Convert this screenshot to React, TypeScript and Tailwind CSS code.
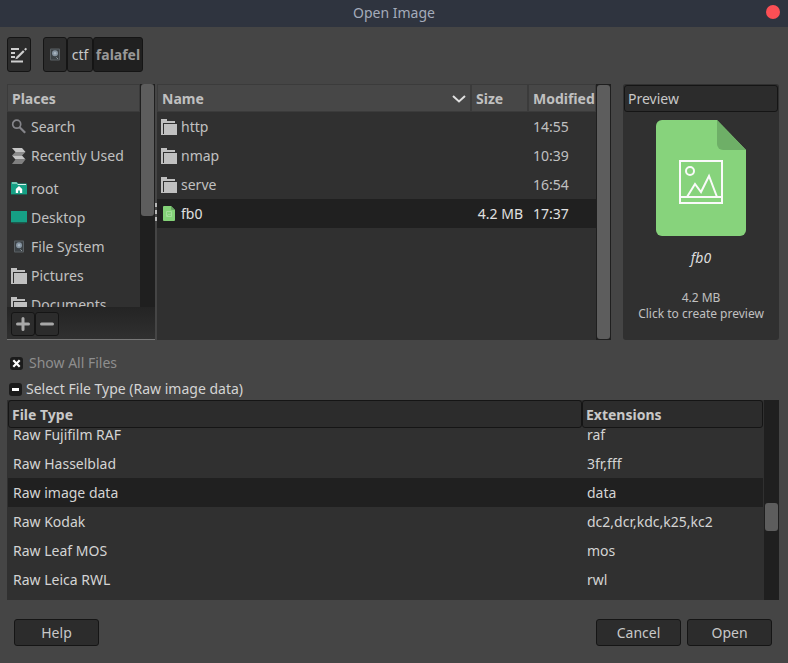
import type { ReactNode } from "react";

const HEAD_CELL = "border border-[#3b3b3b] bg-[#474747] p-0 pt-px pl-1 text-left font-bold";
const BUTTON =
  "flex items-center justify-center rounded-[3px] border border-[#151515] bg-[#2c2c2c] text-[#c8c8c8]";

function FolderIcon() {
  return (
    <svg width="16" height="16" viewBox="0 0 16 16" className="shrink-0" shapeRendering="crispEdges">
      <path d="M0 0h6v2h8v2H2v11h1v1H0z" fill="#c0c0c0" />
      <path d="M3 5h13v11H3z" fill="#c0c0c0" />
    </svg>
  );
}

function SearchIcon() {
  return (
    <svg width="16" height="16" viewBox="0 0 16 16" className="shrink-0" fill="none" stroke="#85858a">
      <circle cx="5.7" cy="5.2" r="4" strokeWidth="1.7" />
      <path d="M8.6 8.2 14.2 13.8" strokeWidth="2.2" />
    </svg>
  );
}

function RecentIcon() {
  return (
    <svg width="16" height="16" viewBox="0 0 16 16" className="shrink-0">
      <path d="M1 0h10l3.5 4h-10z" fill="#c6c6c6" />
      <path d="M4.5 4h10L11 7.5H1z" fill="#8b8b8b" />
      <path d="M1 7.5h10l3.5 4h-10z" fill="#c6c6c6" />
      <path d="M4.5 11.5h10L11 16H1z" fill="#808080" />
    </svg>
  );
}

function HomeIcon() {
  return (
    <svg width="16" height="13" viewBox="0 0 16 13" className="shrink-0">
      <path d="M0 1a1 1 0 0 1 1-1h5l1 1.5h8a1 1 0 0 1 1 1V12H0z" fill="#16a085" />
      <path d="M1 0.5h4.6l1 1.5H15v1H7L5.6 1.5H1z" fill="#d9efe9" />
      <path d="M0 12h16v1H0z" fill="#215c50" />
      <path d="M8 4 4.8 7v4h2.3V8.6h1.8V11h2.3V7z" fill="#fff" />
    </svg>
  );
}

function DesktopIcon() {
  return (
    <svg width="16" height="13" viewBox="0 0 16 13" className="shrink-0">
      <path d="M0 0h16v11H0z" fill="#16a085" />
      <path d="M0 11h16v1H0z" fill="#1d5a4e" />
      <path d="M2 12h12v1H2z" fill="#25453e" />
    </svg>
  );
}

function DiskIcon() {
  return (
    <svg width="16" height="13" viewBox="0 0 16 13" className="shrink-0">
      <rect x="3" y="0.5" width="10" height="12" rx="1" fill="#5a6064" />
      <rect x="4" y="1.5" width="8" height="10" fill="#3c4246" />
      <circle cx="8" cy="5.2" r="3" fill="#8593a0" />
      <circle cx="8" cy="5.2" r="1.2" fill="#a9b6c0" />
      <path d="M9.5 9.5 10.8 10.8" stroke="#a0a8ae" strokeWidth="1" />
    </svg>
  );
}

function ImageFileIcon() {
  return (
    <svg width="12" height="15" viewBox="0 0 12 15" className="mx-0.5 shrink-0">
      <path d="M1 0h7l4 4v10a1 1 0 0 1-1 1H1a1 1 0 0 1-1-1V1a1 1 0 0 1 1-1z" fill="#84d278" />
      <path d="M8 0l4 4H9a1 1 0 0 1-1-1z" fill="#68a561" />
      <path d="M3.5 5.5h5v5h-5z" fill="none" stroke="#a4de9b" />
      <path d="M4 10l1.7-2 1 1L8 7.5" fill="none" stroke="#a4de9b" />
    </svg>
  );
}

function ImageFilePreview() {
  return (
    <svg width="90" height="116" viewBox="0 0 90 116" role="img" aria-label="Image file">
      <path d="M6 0h55l29 30v80a6 6 0 0 1-6 6H6a6 6 0 0 1-6-6V6a6 6 0 0 1 6-6z" fill="#87d37c" />
      <path d="M61 0l29 30H67a6 6 0 0 1-6-6z" fill="#6eaf67" />
      <g fill="none" stroke="#fafafa" strokeWidth="2">
        <path d="M24 41h42v42H24zM24 77h42" />
        <circle cx="34" cy="51" r="4" />
        <path d="M31 77l8-13 6 8 8-16 8 21" />
      </g>
    </svg>
  );
}

function EditPathIcon() {
  return (
    <svg width="18" height="16" viewBox="0 0 18 16" fill="none" stroke="#cfcfcf">
      <path d="M1 2h8M1 6h4M1 10h4M1 14.5h12" strokeWidth="2" />
      <path d="M7 10.8 13.8 4" strokeWidth="2.2" />
      <path d="M14.9 1.5l1.4 1.4" strokeWidth="2.2" />
      <path d="M5.4 12.3l.7-2.6 1.9 1.9z" fill="#cfcfcf" stroke="none" />
    </svg>
  );
}

type Place = { label: string; icon: ReactNode };

const shortcuts: Place[] = [
  { label: "Search", icon: <SearchIcon /> },
  { label: "Recently Used", icon: <RecentIcon /> },
];

const places: Place[] = [
  { label: "root", icon: <HomeIcon /> },
  { label: "Desktop", icon: <DesktopIcon /> },
  { label: "File System", icon: <DiskIcon /> },
  { label: "Pictures", icon: <FolderIcon /> },
  { label: "Documents", icon: <FolderIcon /> },
];

const files = [
  { name: "http", size: "", modified: "14:55", folder: true },
  { name: "nmap", size: "", modified: "10:39", folder: true },
  { name: "serve", size: "", modified: "16:54", folder: true },
  { name: "fb0", size: "4.2 MB", modified: "17:37", folder: false },
];

const fileTypes = [
  { name: "Raw Hasselblad", ext: "3fr,fff" },
  { name: "Raw image data", ext: "data" },
  { name: "Raw Kodak", ext: "dc2,dcr,kdc,k25,kc2" },
  { name: "Raw Leaf MOS", ext: "mos" },
  { name: "Raw Leica RWL", ext: "rwl" },
];

function PlaceGroup({ items }: { items: Place[] }) {
  return (
    <ul>
      {items.map((p) => (
        <li key={p.label}>
          <button type="button" className="flex h-[29px] w-full items-center gap-1 pl-1 text-left whitespace-nowrap">
            {p.icon}
            {p.label}
          </button>
        </li>
      ))}
    </ul>
  );
}

function PlacesPanel() {
  return (
    <section className="flex w-[148px] shrink-0 flex-col border-b border-[#777777] bg-[#272727]">
      <div className="flex min-h-0 flex-1">
        <div className="min-w-0 flex-1 overflow-hidden bg-[#303030]">
          <h2 className="flex h-7 items-center border border-[#3b3b3b] bg-[#474747] px-1 pt-0.5 font-bold">Places</h2>
          <PlaceGroup items={shortcuts} />
          <div className="h-1" />
          <PlaceGroup items={places} />
        </div>
        <div className="w-[15px] bg-[#1f1f1f] px-px">
          <div className="h-[132px] rounded-[3px] bg-[#5d5d5d]" />
        </div>
      </div>
      <div className="flex h-8 items-center bg-linear-to-b from-[#242424] to-[#303030] pt-0.5 pl-1">
        <button type="button" aria-label="Add bookmark" className={`${BUTTON} size-6`}>
          <svg width="14" height="14" viewBox="0 0 14 14" stroke="#a8a8a8" strokeWidth="3" strokeLinecap="round">
            <path d="M1.5 7h11M7 1.5v11" />
          </svg>
        </button>
        <button type="button" aria-label="Remove bookmark" className={`${BUTTON} size-6`}>
          <svg width="14" height="14" viewBox="0 0 14 14" stroke="#a8a8a8" strokeWidth="3" strokeLinecap="round">
            <path d="M1.5 7h11" />
          </svg>
        </button>
      </div>
    </section>
  );
}

function FilesPanel() {
  return (
    <section className="flex min-w-0 flex-1 bg-[#303030]">
      <div className="min-w-0 flex-1">
        <table className="w-full table-fixed border-separate border-spacing-0">
          <colgroup>
            <col />
            <col className="w-[57px]" />
            <col className="w-[68px]" />
          </colgroup>
          <thead>
            <tr className="h-7">
              <th className={HEAD_CELL}>
                <div className="flex items-center justify-between pr-1">
                  Name
                  <svg width="14" height="8" viewBox="0 0 14 8" fill="none" stroke="#e0e0e0" strokeWidth="2">
                    <path d="M1 1l6 5.5L13 1" />
                  </svg>
                </div>
              </th>
              <th className={HEAD_CELL}>Size</th>
              <th className={HEAD_CELL}>Modified</th>
            </tr>
          </thead>
          <tbody>
            {files.map((f) => (
              <tr key={f.name} className={f.folder ? "h-[29px]" : "h-[29px] bg-[#202020] text-[#e0e0e0]"}>
                <td className="p-0 pl-1">
                  <div className="flex items-center gap-1">
                    {f.folder ? <FolderIcon /> : <ImageFileIcon />}
                    {f.name}
                  </div>
                </td>
                <td className="p-0 pr-[5px] text-right whitespace-nowrap">{f.size}</td>
                <td className="p-0 pl-[5px]">{f.modified}</td>
              </tr>
            ))}
          </tbody>
        </table>
      </div>
      <div className="flex w-[15px] bg-[#1f1f1f] p-px">
        <div className="flex-1 rounded-[3px] bg-[#5d5d5d]" />
      </div>
    </section>
  );
}

function PreviewPanel() {
  return (
    <section className="ml-3 flex w-[156px] shrink-0 flex-col rounded-[3px] bg-[#303030] p-px">
      <button type="button" className={`${BUTTON} h-[27px] shrink-0 justify-start px-[3px]`}>
        Preview
      </button>
      <button type="button" className="flex flex-col items-center pt-2">
        <ImageFilePreview />
        <span className="mt-3 leading-5 text-[#dddddd] italic">fb0</span>
        <span className="mt-[22px] text-xs leading-4">4.2 MB</span>
        <span className="text-xs leading-4 whitespace-nowrap">Click to create preview</span>
      </button>
    </section>
  );
}

function FileTypeTable() {
  const head = "rounded-[3px] border border-[#151515] bg-[#2c2c2c] p-0 px-[3px] pt-px text-left font-bold";
  return (
    <section className="flex h-[200px] bg-[#303030] text-[#d4d4d4]">
      <div className="min-w-0 flex-1 overflow-hidden px-px">
        <table className="w-full table-fixed border-separate border-spacing-0">
          <colgroup>
            <col />
            <col className="w-[181px]" />
          </colgroup>
          <thead>
            <tr className="h-7 text-[#c8c8c8]">
              <th className={head}>File Type</th>
              <th className={head}>Extensions</th>
            </tr>
          </thead>
          <tbody>
            <tr>
              {["Raw Fujifilm RAF", "raf"].map((text) => (
                <td key={text} className="p-0 pl-[5px]">
                  <div className="flex h-[21px] items-end overflow-hidden">
                    <div className="flex h-[29px] shrink-0 items-center">{text}</div>
                  </div>
                </td>
              ))}
            </tr>
            {fileTypes.map((t) => (
              <tr key={t.name} className={t.ext === "data" ? "h-[29px] bg-[#202020]" : "h-[29px]"}>
                <td className="p-0 pl-[5px]">{t.name}</td>
                <td className="p-0 pl-[5px]">{t.ext}</td>
              </tr>
            ))}
          </tbody>
        </table>
      </div>
      <div className="flex w-[15px] flex-col bg-[#1f1f1f] px-px pt-[103px]">
        <div className="h-7 rounded-[3px] bg-[#5d5d5d]" />
      </div>
    </section>
  );
}

export default function App() {
  return (
    <div className="flex min-h-screen flex-col bg-[#454545] font-['Noto_Sans',sans-serif] text-[14px] leading-5 text-[#c0c0c0]">
      <header className="flex h-[27px] items-center bg-[#2f343f] px-2 pb-0.5">
        <div className="flex-1" />
        <h1 className="text-[#a4abba]">Open Image</h1>
        <div className="flex flex-1 justify-end">
          <button type="button" aria-label="Close" className="mb-0.5 size-3.5 rounded-full bg-[#fc4f55]" />
        </div>
      </header>

      <main className="flex flex-1 flex-col pr-[9px] pl-[7px]">
        <nav className="flex items-center gap-3 pt-2.5 pb-3">
          <button type="button" aria-label="Type a file name" className={`${BUTTON} h-[35px] w-6`}>
            <EditPathIcon />
          </button>
          <div className="flex">
            <button type="button" aria-label="File system root" className={`${BUTTON} h-[35px] w-6`}>
              <DiskIcon />
            </button>
            <button type="button" className={`${BUTTON} h-[35px] w-[26px]`}>
              ctf
            </button>
            <button
              type="button"
              className="flex h-[35px] w-[50px] items-center justify-center rounded-[3px] border border-[#151515] bg-[#202020] font-bold text-[#989898]"
            >
              falafel
            </button>
          </div>
        </nav>

        <div className="flex h-64">
          <PlacesPanel />
          <div className="flex w-0.5 flex-col items-stretch justify-center gap-[3px]">
            <span className="h-1 bg-[#b8b8b8]" />
            <span className="h-1 bg-[#b8b8b8]" />
            <span className="h-1 bg-[#b8b8b8]" />
          </div>
          <FilesPanel />
          <PreviewPanel />
        </div>

        <label className="mt-[13px] flex items-center gap-1.5 pl-[3px] text-[#8e8e8e]">
          <span className="grid size-[13px]">
            <input
              type="checkbox"
              defaultChecked
              className="size-[13px] appearance-none rounded-[3px] bg-[#1b1b1b] [grid-area:1/1]"
            />
            <svg
              width="13"
              height="13"
              viewBox="0 0 13 13"
              stroke="#fff"
              strokeWidth="2.2"
              className="pointer-events-none [grid-area:1/1]"
            >
              <path d="M3.3 3.3l6.4 6.4M9.7 3.3 3.3 9.7" />
            </svg>
          </span>
          Show All Files
        </label>
        <button type="button" aria-expanded="true" className="mt-1.5 flex items-center gap-1 pl-0.5 text-[#d4d4d4]">
          <svg width="13" height="13" viewBox="0 0 13 13">
            <rect width="13" height="13" rx="3" fill="#1b1b1b" />
            <path d="M3 5h7v3H3z" fill="#fff" />
          </svg>
          Select File Type (Raw image data)
        </button>

        <div className="mt-px">
          <FileTypeTable />
        </div>

        <footer className="mt-[19px] mb-[17px] flex justify-between px-[7px]">
          <button type="button" className={`${BUTTON} h-[27px] w-[85px]`}>
            Help
          </button>
          <div className="flex gap-1.5">
            <button type="button" className={`${BUTTON} h-[27px] w-[85px]`}>
              Cancel
            </button>
            <button type="button" className={`${BUTTON} h-[27px] w-[85px]`}>
              Open
            </button>
          </div>
        </footer>
      </main>
    </div>
  );
}
